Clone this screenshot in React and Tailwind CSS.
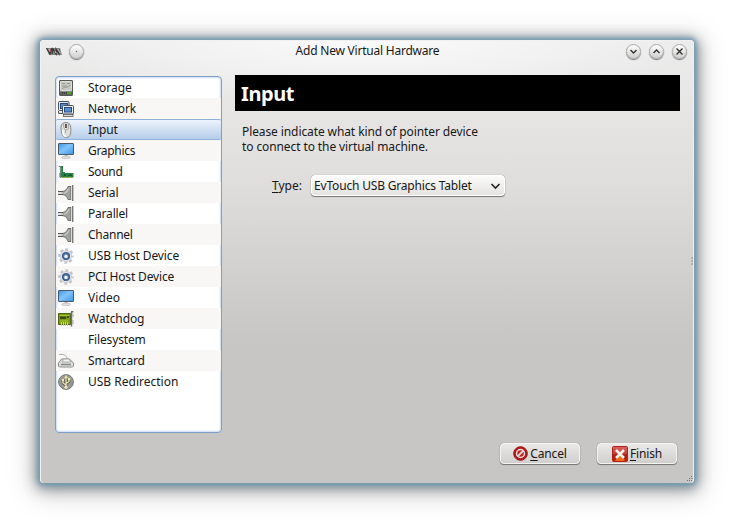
import React from "react";

function Icon({ name }) {
  const common = { width: 16, height: 16, viewBox: "0 0 16 16", className: "block" };
  switch (name) {
    case "storage":
      return (
        <svg {...common}>
          <rect x="1.5" y=".5" width="13" height="15" rx=".5" fill="#b5b7b3" stroke="#555753" />
          <rect x="2.5" y="1.5" width="11" height="9" rx="1" fill="#c6c8c4" stroke="#dcdedb" />
          <path d="M4 9c2-3 5 0 8-4M4 3.500h3M9 3.500h3M4 6h5" stroke="#969894" fill="none" />
          <rect x="2" y="11.500" width="12" height="3.500" fill="#60625e" />
          <path d="M4 13h5" stroke="#222" strokeDasharray="1 1" />
          <rect x="9" y="12.5" width="4" height="1.500" fill="#45b414" />
        </svg>
      );
    case "network":
      return (
        <svg {...common}>
          <rect x=".5" y=".5" width="10.5" height="9" rx="1" fill="#e8e9e6" stroke="#44505c" />
          <rect x="2.5" y="2.5" width="7" height="5" fill="#5c8fc9" stroke="#204a87" />
          <path d="M.5 10v2.500H5" stroke="#555753" fill="#ddd" />
          <rect x="4.5" y="4.5" width="11" height="8.5" rx="1" fill="#eeeeec" stroke="#44505c" />
          <rect x="6.5" y="6.5" width="7" height="4.500" fill="#5c8fc9" stroke="#204a87" />
          <rect x="5.500" y="13.500" width="9.500" height="2" fill="#ddd" stroke="#555753" strokeWidth=".8" />
        </svg>
      );
    case "input":
      return (
        <svg {...common}>
          <path d="M3 5C3 2 5 .5 8 .5s4.500 2 4.800 5c.4 5-.2 10-4.300 10S3 11 3 5z" fill="#dededc" stroke="#888a85" />
          <path d="M4.800 8c0 4 1 6 3 6.500" stroke="#fff" strokeWidth="1.500" fill="none" />
          <path d="M5.500 2c0 3 .5 4.500 2 6l3-1V2M7.500 8v3" stroke="#9fa19c" fill="none" strokeWidth=".8" />
          <path d="M8 2v4" stroke="#4c4444" strokeWidth="1.800" />
          <path d="M8 4v1" stroke="#c34e48" />
        </svg>
      );
    case "screen":
      return (
        <svg {...common}>
          <defs>
            <linearGradient id="blueScreen" x1="0" y1="0" x2="1" y2="1">
              <stop stopColor="#3b94e4" />
              <stop offset=".45" stopColor="#82c4fb" />
              <stop offset="1" stopColor="#3f95e5" />
            </linearGradient>
          </defs>
          <rect x=".5" y=".5" width="15" height="11" rx=".5" fill="url(#blueScreen)" stroke="#4a5967" />
          <path d="M6.500 12h3v1.500h-3z" fill="#bbb" />
          <ellipse cx="8" cy="14.400" rx="4.500" ry="1.200" fill="#dedfde" stroke="#b9bbb9" strokeWidth=".6" />
        </svg>
      );
    case "sound":
      return (
        <svg {...common}>
          <path d="M2 2h3v6h2v1h8.500v4.500H2z" fill="#288146" />
          <path d="M.8 2.500h1.700V14" stroke="#72807a" fill="none" strokeWidth="1.200" />
          <path d="M1.500 9v4" stroke="#d2a33e" />
          <path d="M6 10h2v2H6zM10 10.500h4v1.500h-4z" fill="#145b2c" />
          <path d="M3 4v5" stroke="#52a96d" />
          <path d="M4 13.500h11" stroke="#91a94e" strokeDasharray="3 1" />
        </svg>
      );
    case "serial":
      return (
        <svg {...common}>
          <path d="M4 6.500C8 6 9 4 10 1.500h3v13h-3C9 12 8 10 4 9.500z" fill="#9fa19c" stroke="#666864" strokeWidth=".9" />
          <path d="M0 6.500h5M0 9.500h5" stroke="#555753" />
          <path d="M0 8h5" stroke="#d3d5d0" strokeWidth="1.500" />
          <path d="M6 8.500c3-1 4-3 5-5" stroke="#c8cac5" strokeWidth="1.300" fill="none" />
          <path d="M13.500 1v14" stroke="#ddd" />
          <path d="M14.700 0v16" stroke="#777975" strokeWidth="1.400" />
        </svg>
      );
    case "gear":
      return (
        <svg {...common}>
          <circle cx="8" cy="8" r="6.500" fill="none" stroke="#c2c4c8" strokeWidth="2.500" strokeDasharray="2.800 2.305" strokeDashoffset="1.400" />
          <circle cx="8" cy="8" r="5.600" fill="#e3e4e7" stroke="#c1c3c7" strokeWidth=".7" />
          <circle cx="8" cy="8" r="3.300" fill="#6687b8" stroke="#3b5d94" strokeWidth="1.600" />
          <circle cx="8" cy="8.400" r="1.700" fill="#f3f6fc" />
        </svg>
      );
    case "watchdog":
      return (
        <svg {...common}>
          <path d="M.5 2.500h12v11H.5z" fill="#7d9d16" stroke="#4c6111" />
          <path d="M2 4.500h9M2 10h8" stroke="#a6c526" />
          <path d="M2 5.500h6v2.500H2zM9 5h2v2H9z" fill="#3c4722" />
          <path d="M3 13h8" stroke="#dbd849" strokeWidth="4" strokeDasharray="1 1" />
          <path d="M13 .8h2.500M13.500 1v14.500" stroke="#6d706a" strokeWidth="1.500" />
          <path d="M15 3v3M15 9v4" stroke="#a3a5a0" />
        </svg>
      );
    case "smartcard":
      return (
        <svg {...common}>
          <path d="M1 1.500c4-.5 8 .5 8 4" stroke="#a7a9a4" fill="none" />
          <path d="M.5 10l3-4h8l4 4v3l-1 1H1.500l-1-1z" fill="#dddedc" stroke="#8c8e8a" strokeLinejoin="round" />
          <path d="M4 9l2-3h5l2 3z" fill="#f3f3f2" stroke="#999" strokeWidth=".8" />
          <path d="M3 11.500h10" stroke="#858783" strokeWidth="1.500" />
        </svg>
      );
    case "usb":
      return (
        <svg {...common}>
          <circle cx="8" cy="8" r="7.400" fill="#969893" stroke="#777974" />
          <path d="M8 13V3M8 11L5 9V6M8 9.500l3-2V5" stroke="#4f4f42" strokeWidth="2.600" fill="none" />
          <path d="M8 13V3M8 11L5 9V6M8 9.500l3-2V5" stroke="#f1e7b5" strokeWidth="1.300" fill="none" />
          <path d="M8 1l-2 3.200h4z" fill="#f1e7b5" />
          <circle cx="8" cy="13.200" r="1.600" fill="#f1e7b5" />
          <circle cx="5" cy="6" r="1.200" fill="#f1e7b5" />
          <path d="M10 4h2.300v2.300H10z" fill="#f1e7b5" />
        </svg>
      );
    default:
      return null;
  }
}

const devices = [
  ["Storage", "storage", "tracking-[0px]"],
  ["Network", "network", "tracking-[0px]"],
  ["Input", "input", "tracking-[-0.2px]"],
  ["Graphics", "screen", "tracking-[-0.3px]"],
  ["Sound", "sound", "tracking-[-0.3px]"],
  ["Serial", "serial", "tracking-[-0.15px]"],
  ["Parallel", "serial", "tracking-[-0.2px]"],
  ["Channel", "serial", "tracking-[-0.25px]"],
  ["USB Host Device", "gear", "tracking-[-0.1px]"],
  ["PCI Host Device", "gear", "tracking-[-0.15px]"],
  ["Video", "screen", "tracking-[0.1px]"],
  ["Watchdog", "watchdog", "tracking-[-0.1px]"],
  ["Filesystem", "", "tracking-[-0.15px]"],
  ["Smartcard", "smartcard", "tracking-[-0.2px]"],
  ["USB Redirection", "usb", "tracking-[0px]"],
];

function DeviceRow({ label, icon, tracking, index }) {
  const look =
    label === "Input"
      ? "rounded-[2px] border-y border-[#8fb0d8] bg-linear-to-b from-[#edf3fc] to-[#b6cdea]"
      : index % 2
        ? "border-y border-transparent bg-[#f8f7f6]"
        : "border-y border-transparent";
  return (
    <li className={"flex h-[21px] items-center pl-[2px] " + look}>
      <span className="h-4 w-[30px] shrink-0"><Icon name={icon} /></span>
      <span className={"whitespace-nowrap leading-[19px] " + tracking}>{label}</span>
    </li>
  );
}

function TitleButton({ d, dot }) {
  return (
    <button className="flex size-[15px] items-center justify-center rounded-full border border-[#a9a9a9] bg-linear-to-b from-white to-[#d0d0cf] shadow-[0_1px_1px_#777]">
      <svg width="13" height="13" viewBox="0 0 13 13" className="shrink-0">
        {dot ? <circle cx="6.500" cy="6.500" r=".7" fill="#666" /> : <path d={d} fill="none" stroke="#333" strokeWidth="1.400" />}
      </svg>
    </button>
  );
}

function ActionButton({ first, rest, children }) {
  return (
    <button className="flex h-[21px] w-20 items-center justify-center gap-[2px] rounded-[4px] border border-[#f3f3f2] bg-linear-to-b from-[#eae9e8] to-[#d0cfcd] shadow-[0_1px_1px_#747270,0_0_1px_#777]">
      {children}
      <span className="leading-[19px] tracking-[-0.15px]"><span className="underline underline-offset-2">{first}</span>{rest}</span>
    </button>
  );
}

export default function App() {
  return (
    <main className="h-[523px] w-[734px] overflow-hidden bg-white pl-10 pt-10 font-['Noto_Sans','Open_Sans',sans-serif] text-[12px] text-[#171717]">
      <section className="relative flex h-[443px] w-[654px] flex-col rounded-[4px] border border-b-0 border-[#f1f1f1] bg-[radial-gradient(ellipse_330px_64px_at_50%_0,#fafafa,#fafafa00),linear-gradient(#ececec_0px,#e6e5e4_75px,#dfdedc_140px,#c8c6c4_300px)] shadow-[0_0_4px_2px_#6f9db3,0_2px_12px_4px_#69747fbb,0_4px_24px_7px_#77777766]">
        <header className="flex h-[20px] items-center pl-[5px] pr-[6px]">
          <svg width="16" height="9" viewBox="0 0 16 9" className="mr-[7px]">
            <path d="M0 1h14l2 7H3z" fill="#858585" />
            <path d="M.5 1l3.500 6 2-6M6 7l1-5 3 5V2l3 5V2" fill="none" stroke="#383838" strokeWidth="1.200" />
            <path d="M3 2l1 2M9 4l1 2M12 2l2 4" stroke="#ccc" />
            <path d="M4.500 2v3" stroke="#a64a55" />
          </svg>
          <TitleButton dot />
          <h1 className="flex-1 pl-[22px] text-center leading-5 tracking-[-0.22px]">Add New Virtual Hardware</h1>
          <div className="ml-[-3px] flex gap-[8px]">
            <TitleButton d="M3.500 5L6.500 8 9.500 5" />
            <TitleButton d="M3.500 8L6.500 5 9.500 8" />
            <TitleButton d="M3.500 3.500l6 6M9.500 3.500l-6 6" />
          </div>
        </header>
        <div className="flex h-[373px] pl-[14px] pt-[15px]">
          <ul className="h-[357px] w-[167px] overflow-hidden rounded-[4px] border border-[#7d9fc7] bg-white shadow-[inset_0_0_2px_1px_#ccdcf5]">
            {devices.map(([label, icon, tracking], index) => (
              <DeviceRow key={label} label={label} icon={icon} tracking={tracking} index={index} />
            ))}
          </ul>
          <div className="ml-[13px] flex w-[445px] flex-col">
            <h2 className="mt-[-1px] h-9 bg-black pl-[6px] text-[20px] font-bold leading-[37px] tracking-[-0.4px] text-white">Input</h2>
            <p className="ml-[7px] mt-[13px] whitespace-nowrap leading-[15px] tracking-[-0.1px]">
              Please indicate what kind of pointer device<br />to connect to the virtual machine.
            </p>
            <div className="mt-[21px] flex h-[21px] items-center pl-[37px]">
              <span className="w-[39px]"><span className="underline underline-offset-2">T</span>ype:</span>
              <button className="flex h-[21px] w-[194px] items-center justify-between rounded-[4px] border border-white bg-linear-to-b from-[#fcfcfb] to-[#e4e3e1] pl-[2px] pr-[3px] shadow-[0_1px_1px_#777,0_0_1px_#777]">
                <span className="whitespace-nowrap leading-[19px] tracking-[-0.18px]">EvTouch USB Graphics Tablet</span>
                <svg width="11" height="8" viewBox="0 0 11 8"><path d="M1.500 2l4 4 4-4" fill="none" stroke="#222" strokeWidth="1.600" /></svg>
              </button>
            </div>
          </div>
        </div>
        <footer className="flex gap-[17px] pl-[459px] pt-[9px]">
          <ActionButton first="C" rest="ancel">
            <svg width="15" height="15" viewBox="0 0 15 15">
              <circle cx="7.500" cy="7.500" r="6.800" fill="#b51616" stroke="#911" />
              <circle cx="7.500" cy="7.500" r="4" fill="#c62121" stroke="#ddd" strokeWidth="1.500" />
              <path d="M4.700 10.300l5.600-5.600" stroke="#ddd" strokeWidth="1.800" />
            </svg>
          </ActionButton>
          <ActionButton first="F" rest="inish">
            <svg width="16" height="16" viewBox="0 0 16 16">
              <defs>
                <linearGradient id="redTile" x1="0" y1="0" x2="0" y2="1">
                  <stop stopColor="#d96560" />
                  <stop offset=".5" stopColor="#c43b34" />
                  <stop offset=".55" stopColor="#ad1a12" />
                  <stop offset="1" stopColor="#bd2912" />
                </linearGradient>
              </defs>
              <rect x=".5" y=".5" width="15" height="15" rx="1" fill="url(#redTile)" stroke="#b3201b" />
              <path d="M8 9l5 6H3z" fill="#f26b16" />
              <path d="M4 4l8 8M12 4l-8 8" stroke="#f5f2f0" strokeWidth="2.500" />
            </svg>
          </ActionButton>
        </footer>
        <svg width="3" height="8" viewBox="0 0 3 8" className="absolute -right-px top-[216px]">
          <path d="M.5 1h1.500M.5 4h1.500M.5 7h1.500" stroke="#777" />
        </svg>
        <svg width="6" height="6" viewBox="0 0 6 6" className="absolute bottom-px right-0">
          <path d="M4 .5h1M2 2.500h1M4.500 2.500h1M0 4.500h1M2 4.500h1M4 4.500h1" stroke="#777" />
        </svg>
      </section>
    </main>
  );
}
